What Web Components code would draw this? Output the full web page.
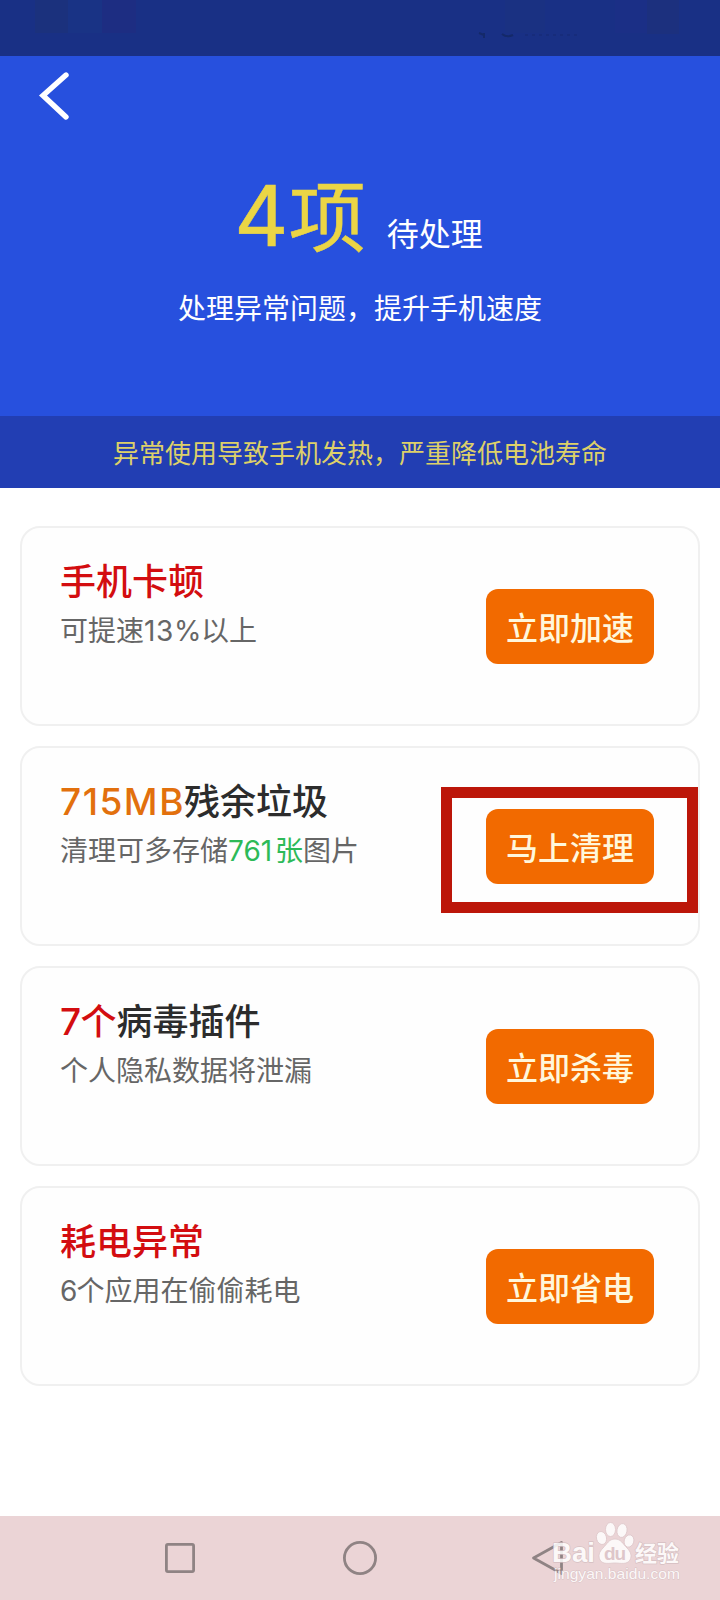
<!DOCTYPE html>
<html lang="zh-CN">
<head>
<meta charset="utf-8">
<title>手机检测</title>
<style>
body{margin:0;background:#fff;font-family:"Noto Sans CJK SC",sans-serif;overflow:hidden}
.red{color:#d30d10}
.orange{color:#e2700d}
.green{color:#2dba58}
.num{font-family:Inter,sans-serif;display:inline-block;line-height:1}
</style>
</head>
<body>
<phone-screen>
  <status-strip></status-strip>
  <result-hero count="4" unit="项" label="待处理" note="处理异常问题，提升手机速度"></result-hero>
  <warning-band>异常使用导致手机发热，严重降低电池寿命</warning-band>
  <issue-list>
    <issue-card action="立即加速"><span slot="title" class="red">手机卡顿</span><span slot="note">可提速<span class="num" style="width:57px;letter-spacing:.7px">13%</span>以上</span></issue-card>
    <issue-card action="马上清理" marked><span slot="title"><span class="orange num" style="width:124px;font-size:37px;letter-spacing:1.5px">715MB</span>残余垃圾</span><span slot="note">清理可多存储<span class="green"><span class="num" style="width:47px">761</span>张</span>图片</span></issue-card>
    <issue-card action="立即杀毒"><span slot="title"><span class="red"><span class="num" style="width:20.5px;font-size:37px">7</span>个</span>病毒插件</span><span slot="note">个人隐私数据将泄漏</span></issue-card>
    <issue-card action="立即省电"><span slot="title" class="red">耗电异常</span><span slot="note"><span class="num" style="width:16.5px;letter-spacing:-1px">6</span>个应用在偷偷耗电</span></issue-card>
  </issue-list>
  <nav-bar></nav-bar>
</phone-screen>
<script>
function define(name, html){
  customElements.define(name, class extends HTMLElement{
    constructor(){
      super();
      const t=document.createElement('template');
      t.innerHTML=html;
      this.attachShadow({mode:'open'}).append(t.content.cloneNode(true));
    }
    connectedCallback(){
      this.shadowRoot.querySelectorAll('[data-attr]').forEach(e=>{e.textContent=this.getAttribute(e.dataset.attr)});
    }
  });
}
define('phone-screen',`<style>:host{display:flex;flex-direction:column;width:720px;height:1600px;background:#fff}</style><slot></slot>`);
define('status-strip',`<style>
:host{display:block;height:56px;background:#193085;flex:none}svg{display:block}</style>
<svg width="720" height="56">
<rect x="35" width="33" height="33" fill="#1b317d"/><rect x="68" width="34" height="33" fill="#193385"/><rect x="102" width="34" height="33" fill="#1d2d82"/>
<rect x="505" width="40" height="33" fill="#1a3182"/><rect x="615" width="32" height="33" fill="#1b2f86"/><rect x="647" width="32" height="34" fill="#1c307e"/>
<path d="M479 33l5 2M484 33v5M502 34q5 4 11 1" fill="none" stroke="#142969" stroke-width="2"/>
<path d="M525 35h54" stroke="#172c7b" stroke-width="2" stroke-dasharray="3 4"/></svg>`);
define('result-hero',`<style>
:host{display:flex;flex-direction:column;height:360px;background:#2750de;color:#fff;flex:none}
.back{display:block;margin:15px 0 0 38px}
.head{display:flex;justify-content:center;align-items:baseline;margin-top:42px;height:100px;line-height:100px;padding-right:3px}
.count{font:400 84px/100px Inter,sans-serif;color:#ebd545;-webkit-text-stroke:.5px #ebd545}
.unit{font-size:77px;color:#ebd545;-webkit-text-stroke:.5px #ebd545}
.label{font-size:32px;margin-left:21px}
.note{text-align:center;font-size:28px;line-height:40px;margin-top:24px}
</style>
<svg class="back" width="34" height="50" viewBox="0 0 34 50"><path d="M28 4L5 24.5L28 46" fill="none" stroke="#fff" stroke-width="5.4" stroke-linecap="round" stroke-linejoin="miter"/></svg>
<div class="head"><span class="count" data-attr="count"></span><span class="unit" data-attr="unit"></span><span class="label" data-attr="label"></span></div>
<div class="note" data-attr="note"></div>`);
define('warning-band',`<style>:host{display:block;height:72px;line-height:72px;background:#223eb3;color:#ddd069;font-size:26px;text-align:center;flex:none}</style><slot></slot>`);
define('issue-list',`<style>:host{display:flex;flex-direction:column;gap:20px;padding:38px 20px 0;flex:1}</style><slot></slot>`);
define('action-button',`<style>:host{display:block;width:168px;height:75px;border-radius:12px;background:#f26a00;color:#fff7dc;font-size:32px;font-weight:500;line-height:75px;text-align:center}</style><slot></slot>`);
define('issue-card',`<style>
:host{display:flex;justify-content:space-between;align-items:center;position:relative;box-sizing:border-box;height:200px;border:2px solid #f0f0f0;border-radius:20px;padding:0 44px 0 38px;flex:none;background:#fefefe}
.copy{align-self:flex-start;padding-top:27px;white-space:nowrap}
.title{font-size:36px;line-height:48px;height:48px;font-weight:500;color:#2c2c2c}
.note{font-size:28px;line-height:52px;height:52px;color:#666}
.mark{display:none}
:host([marked]) .mark{display:block;position:absolute;left:419px;top:39px;width:235px;height:104px;border:11px solid #bc1609}
</style>
<div class="copy"><div class="title"><slot name="title"></slot></div><div class="note"><slot name="note"></slot></div></div>
<action-button><span data-attr="action"></span></action-button><div class="mark"></div>`);
define('site-watermark',`<style>
:host{display:block;position:absolute;left:550px;top:6px;opacity:.85}
text{fill:#fff;stroke:#d3bdc0;stroke-width:1.4;paint-order:stroke;stroke-linejoin:round}
</style>
<svg width="140" height="74" viewBox="550 1522 140 74" style="display:block">
<g fill="#fff" stroke="#dcc5c8" stroke-width=".8">
<ellipse cx="601.5" cy="1538" rx="5" ry="6.6" transform="rotate(-14 601.5 1538)"/><ellipse cx="610.5" cy="1529.5" rx="5" ry="7"/><ellipse cx="622" cy="1530.5" rx="5" ry="7" transform="rotate(10 622 1530.5)"/><ellipse cx="629" cy="1541" rx="4.8" ry="6.2" transform="rotate(15 629 1541)"/>
<path d="M615 1539c6 0 8 5 12 9c4 4 5 8 3 12c-3 5-10 3-15 3s-12 2-15-3c-2-4-1-8 3-12c4-4 6-9 12-9z"/></g>
<text x="552" y="1562" font-family="Liberation Sans" font-weight="700" font-size="28.5" textLength="43" lengthAdjust="spacingAndGlyphs">Bai</text>
<text x="604" y="1560" font-family="Liberation Sans" font-weight="700" font-size="19" textLength="22" style="fill:#dcc4c8;stroke:none">du</text>
<text x="635" y="1560.5" font-family="Noto Sans CJK SC" font-weight="700" font-size="22" textLength="44">经验</text>
<text x="554" y="1579" font-family="Liberation Sans" font-size="14.5" textLength="126" lengthAdjust="spacingAndGlyphs" style="stroke-width:.8">jingyan.baidu.com</text>
</svg>`);
define('nav-bar',`<style>
:host{display:flex;position:relative;box-sizing:border-box;padding-left:162px;gap:144px;height:84px;background:#ebd4d6;flex:none}
.icon{display:block;margin-top:24px;flex:none}
path,rect,circle{fill:none;stroke:#8f8384;stroke-width:2.8;stroke-linejoin:round}
</style>
<svg class="icon" width="36" height="36"><rect x="4.4" y="4.4" width="27.2" height="27.2" rx="1.5"/></svg>
<svg class="icon" width="36" height="36"><circle cx="18" cy="18" r="15.6"/></svg>
<svg class="icon" width="44" height="36"><path d="M39.5 2.5V33.5L11.5 18Z"/></svg>
<site-watermark></site-watermark>`);
</script>
</body>
</html>
